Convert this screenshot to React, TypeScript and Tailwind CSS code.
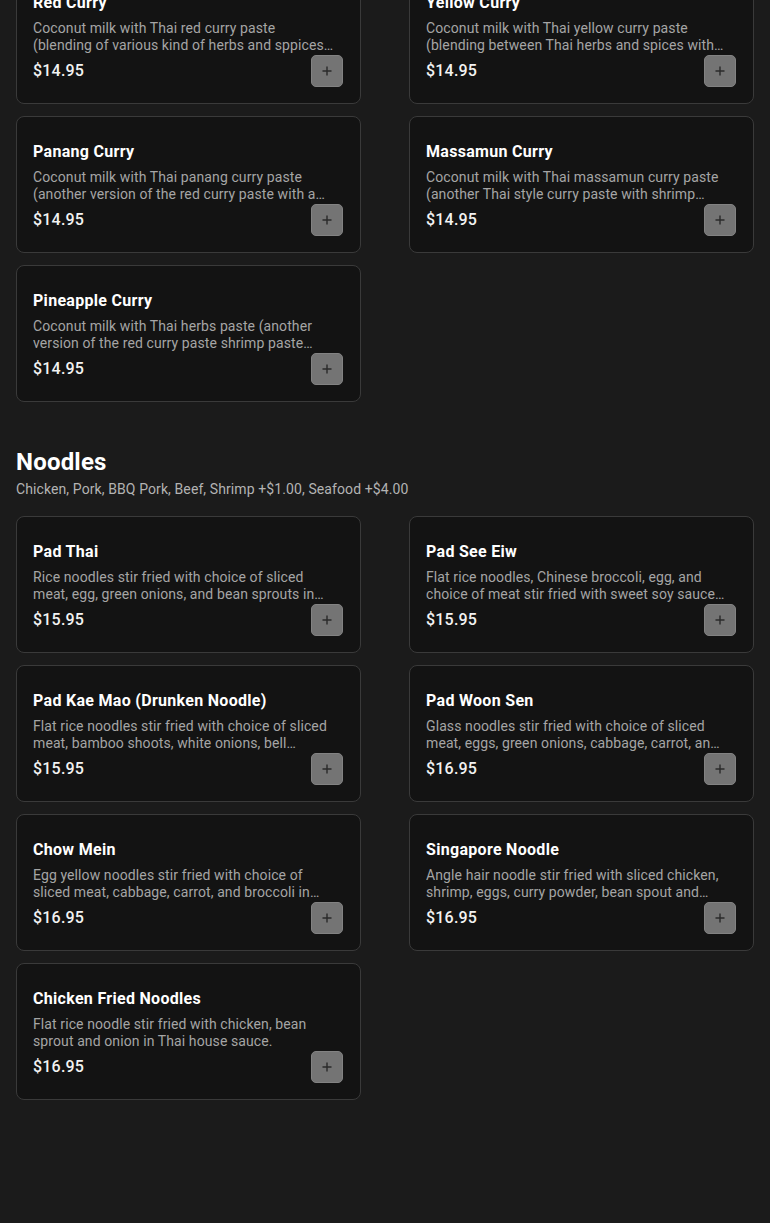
import React from 'react';

interface Dish {
  name: string;
  description: string;
  price: string;
}

interface Section {
  title?: string;
  subtitle?: string;
  items: Dish[];
}

const curries: Dish[] = [
  {
    name: 'Red Curry',
    description:
      'Coconut milk with Thai red curry paste (blending of various kind of herbs and sppices with shrimp paste) bamboo shoots, bell peppers and basil.',
    price: '$14.95',
  },
  {
    name: 'Yellow Curry',
    description:
      'Coconut milk with Thai yellow curry paste (blending between Thai herbs and spices with curry powder) potatoes, carrots and onions.',
    price: '$14.95',
  },
  {
    name: 'Panang Curry',
    description:
      'Coconut milk with Thai panang curry paste (another version of the red curry paste with a peanut flavor) bell peppers and basil.',
    price: '$14.95',
  },
  {
    name: 'Massamun Curry',
    description:
      'Coconut milk with Thai massamun curry paste (another Thai style curry paste with shrimp paste) potatoes, onions and peanuts.',
    price: '$14.95',
  },
  {
    name: 'Pineapple Curry',
    description:
      'Coconut milk with Thai herbs paste (another version of the red curry paste shrimp paste free) pineapple, bell peppers and basil.',
    price: '$14.95',
  },
];

const noodles: Dish[] = [
  {
    name: 'Pad Thai',
    description:
      'Rice noodles stir fried with choice of sliced meat, egg, green onions, and bean sprouts in Thai tamarind sauce, topped with ground peanuts.',
    price: '$15.95',
  },
  {
    name: 'Pad See Eiw',
    description:
      'Flat rice noodles, Chinese broccoli, egg, and choice of meat stir fried with sweet soy sauce and garlic.',
    price: '$15.95',
  },
  {
    name: 'Pad Kae Mao (Drunken Noodle)',
    description:
      'Flat rice noodles stir fried with choice of sliced meat, bamboo shoots, white onions, bell peppers, chili and basil.',
    price: '$15.95',
  },
  {
    name: 'Pad Woon Sen',
    description:
      'Glass noodles stir fried with choice of sliced meat, eggs, green onions, cabbage, carrot, and mushrooms.',
    price: '$16.95',
  },
  {
    name: 'Chow Mein',
    description:
      'Egg yellow noodles stir fried with choice of sliced meat, cabbage, carrot, and broccoli in house sauce.',
    price: '$16.95',
  },
  {
    name: 'Singapore Noodle',
    description:
      'Angle hair noodle stir fried with sliced chicken, shrimp, eggs, curry powder, bean spout and onions.',
    price: '$16.95',
  },
  {
    name: 'Chicken Fried Noodles',
    description: 'Flat rice noodle stir fried with chicken, bean sprout and onion in Thai house sauce.',
    price: '$16.95',
  },
];

const sections: Section[] = [
  { items: curries },
  {
    title: 'Noodles',
    subtitle: 'Chicken, Pork, BBQ Pork, Beef, Shrimp +$1.00, Seafood +$4.00',
    items: noodles,
  },
];

const PlusIcon = () => (
  <svg width="10" height="10" viewBox="0 0 10 10" fill="none">
    <path d="M5 0.5V9.5M0.5 5H9.5" stroke="#2a2a2a" strokeWidth="1.4" />
  </svg>
);

const DishCard: React.FC<{ dish: Dish }> = ({ dish }) => (
  <div className="bg-[#131313] border border-[#3a3a3a] rounded-lg pt-[23px] px-4 pb-4 flex flex-col">
    <h3 className="text-base leading-6 font-bold text-white tracking-[0.3px]">{dish.name}</h3>
    <p className="mt-[5px] pr-[10px] text-sm leading-[17px] text-[#a5a5a5] tracking-[0.1px] line-clamp-2">
      {dish.description}
    </p>
    <div className="mt-[1px] h-8 flex items-center justify-between">
      <span className="text-base font-medium text-[#f2f2f2] tracking-[0.2px]">{dish.price}</span>
      <button className="mr-[1px] w-8 h-8 rounded-[5px] bg-[#747474] border border-[#828282] flex items-center justify-center">
        <PlusIcon />
      </button>
    </div>
  </div>
);

export default function App() {
  return (
    <div
      className="min-h-screen bg-[#1b1b1b] px-4 overflow-hidden"
      style={{ fontFamily: 'Roboto, "Noto Sans", sans-serif' }}
    >
      <div className="-mt-[33px] flex flex-col gap-[44px] pb-[124px]">
        {sections.map((section, i) => (
          <section key={i}>
            {section.title && (
              <div className="mb-[17px]">
                <h2 className="text-2xl leading-8 font-bold text-white tracking-[0.2px]">{section.title}</h2>
                <p className="mt-[1px] text-sm leading-5 text-[#b3b3b3] tracking-[0.1px]">{section.subtitle}</p>
              </div>
            )}
            <div className="grid grid-cols-2 gap-x-12 gap-y-3">
              {section.items.map((dish) => (
                <DishCard key={dish.name} dish={dish} />
              ))}
            </div>
          </section>
        ))}
      </div>
    </div>
  );
}
